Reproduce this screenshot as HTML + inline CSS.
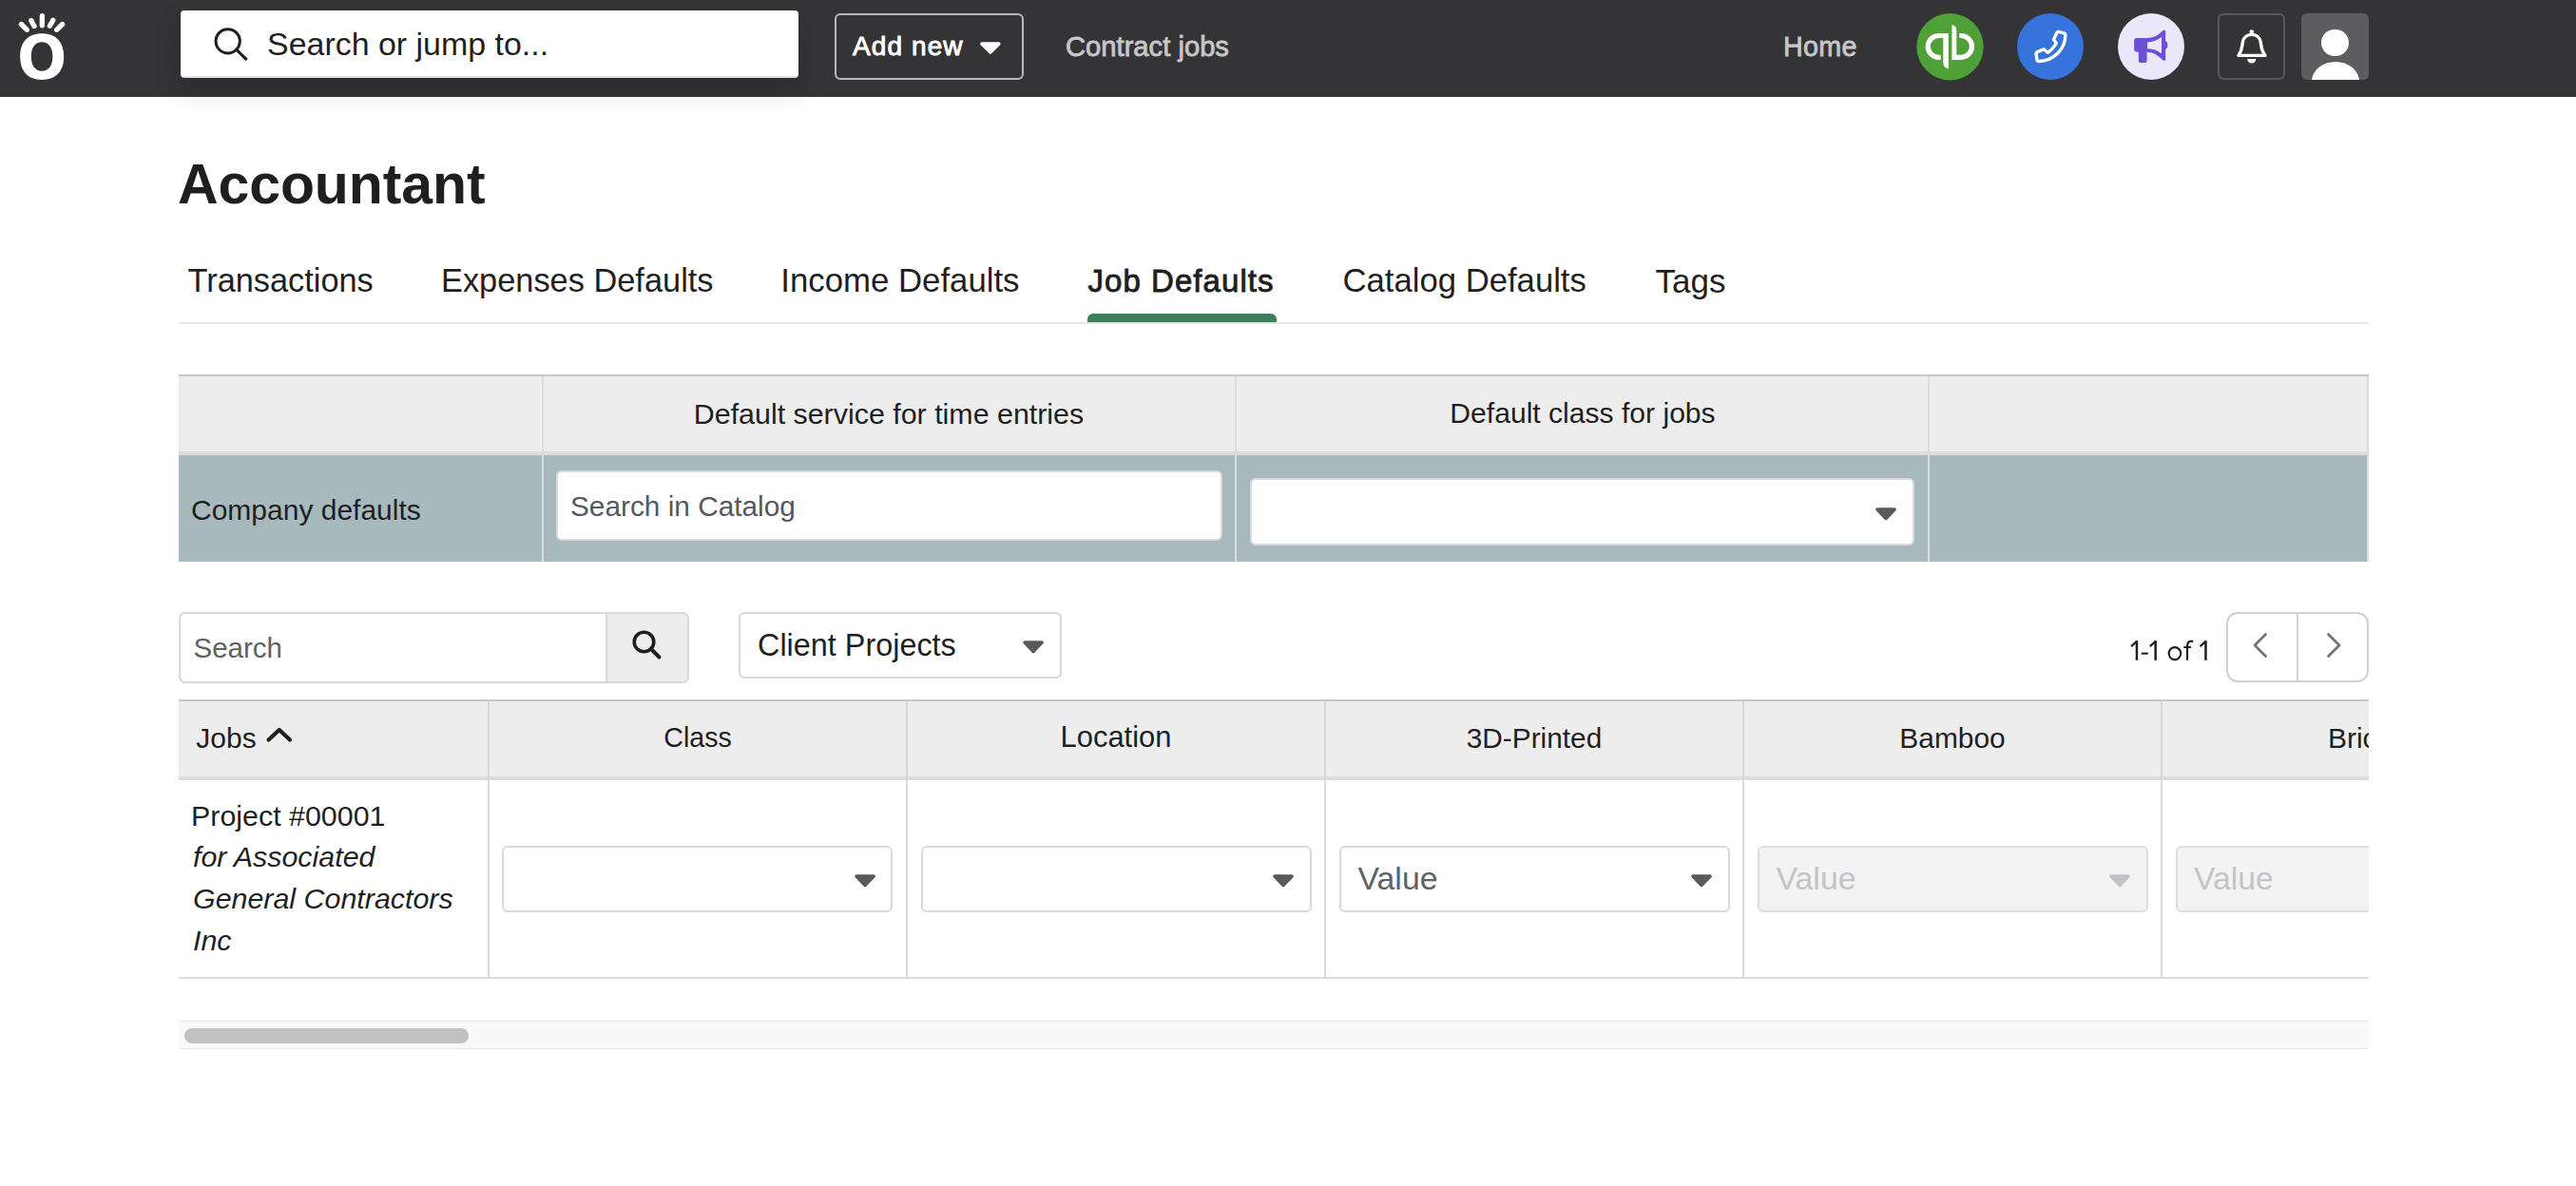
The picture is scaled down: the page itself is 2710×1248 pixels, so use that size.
<!DOCTYPE html>
<html><head><meta charset="utf-8">
<style>
*{box-sizing:border-box;margin:0;padding:0}
html,body{width:2710px;height:1248px;overflow:hidden;background:#fff;font-family:"Liberation Sans",sans-serif;color:#1f1f1f}
.a{position:absolute}
.t{position:absolute;white-space:nowrap}
#nav{position:absolute;left:0;top:0;width:2710px;height:101.5px;background:#343436}
.box{position:absolute;border:2px solid #dadade;border-radius:6px;background:#fff}
.caret{position:absolute}
</style></head><body>

<!-- NAV -->
<div id="nav">
  <svg class="a" style="left:0;top:0" width="100" height="100" viewBox="0 0 100 100">
    <path fill="#fff" fill-rule="evenodd" d="M44.15 35.20C58.87 35.20 67.15 43.98 67.15 59.60C67.15 75.22 58.87 84.00 44.15 84.00C29.43 84.00 21.15 75.22 21.15 59.60C21.15 43.98 29.43 35.20 44.15 35.20ZM44.10 44.30C51.11 44.30 55.40 50.08 55.40 59.50C55.40 68.92 51.11 74.70 44.10 74.70C37.09 74.70 32.80 68.92 32.80 59.50C32.80 50.08 37.09 44.30 44.10 44.30Z"/>
    <g stroke="#fff" stroke-width="5.3" stroke-linecap="round">
      <line x1="44.35" y1="16.65" x2="44.35" y2="26.75"/>
      <line x1="32.8" y1="21.5" x2="36" y2="27.5"/>
      <line x1="22.4" y1="25.5" x2="28.3" y2="31.3"/>
      <line x1="55.8" y1="21.3" x2="52.4" y2="27.3"/>
      <line x1="65.6" y1="25.5" x2="59.7" y2="31.3"/>
    </g>
  </svg>
  <div class="a" style="left:190px;top:11px;width:650px;height:71px;background:#fff;border-radius:4px;border-bottom:2px solid #dedfe4;box-shadow:0 12px 30px rgba(0,0,0,0.16)"></div>
  <svg class="a" style="left:220px;top:25px" width="50" height="45" viewBox="0 0 50 45">
    <circle cx="19.7" cy="18.3" r="12.65" fill="none" stroke="#1f1f1f" stroke-width="3"/>
    <line x1="28.6" y1="27.2" x2="38.7" y2="37" stroke="#1f1f1f" stroke-width="3.2" stroke-linecap="round"/>
  </svg>
  <div class="t" style="left:281px;top:30.3px;font-size:33.95px;line-height:33.95px;color:#1f1f1f">Search or jump to...</div>

  <div class="a" style="left:878px;top:14px;width:199px;height:70px;border:2px solid #b9b9bd;border-radius:6px"></div>
  <div class="t" style="left:897px;top:35px;font-size:28px;line-height:28px;color:#fff;-webkit-text-stroke:0.9px #fff;letter-spacing:1.1px">Add new</div>
  <svg class="a" style="left:1030.2px;top:43px" width="25" height="16" viewBox="0 0 25 16"><polygon points="3.0,3.1 20.8,3.1 11.9,11.9" fill="#fff" stroke="#fff" stroke-width="3.6" stroke-linejoin="round"/></svg>

  <div class="t" style="left:1121px;top:34.8px;font-size:29.2px;line-height:29.2px;color:#c7c7c9;-webkit-text-stroke:0.8px #c7c7c9;letter-spacing:0px">Contract jobs</div>
  <div class="t" style="left:1876px;top:34.6px;font-size:28.7px;line-height:28.7px;color:#c7c7c9;-webkit-text-stroke:0.8px #c7c7c9;letter-spacing:0.35px">Home</div>

  <!-- QB -->
  <svg class="a" style="left:2016px;top:14px" width="71" height="71" viewBox="0 0 71 71">
    <circle cx="35.5" cy="35.2" r="35.2" fill="#50a038"/>
    <g fill="none" stroke="#fff" stroke-width="5.2">
      <path d="M25.7 46.3H23.6A11.4 11.4 0 0 1 23.6 23.5H31"/>
      <path d="M45.3 23.5H47A11.4 11.4 0 0 1 47 46.3H40"/>
    </g>
    <path fill="#fff" d="M28.3 20.9h5.5v37.3c-3 -0.5 -5.5 -2.5 -5.5 -6z"/>
    <path fill="#fff" d="M37.4 11.9c3 0.5 4.9 2.5 4.9 6v31.1h-4.9z"/>
  </svg>
  <!-- Phone -->
  <svg class="a" style="left:2122px;top:14px" width="70" height="70" viewBox="0 0 70 70">
    <circle cx="35" cy="35" r="35" fill="#3673dd"/>
    <path fill="none" stroke="#fff" stroke-width="3.4" stroke-linejoin="round" d="M41.7 20.8Q42.5 19.2 44.25 19.6L49.05 20.8Q50.8 21.2 50.8 23C50.9 37.5 38.5 50 23.1 50.45Q21.3 50.5 21 48.7L20.1 43.1Q19.8 41.3 21.5 40.6L28 37.8L32.2 41.3C36 39 39 35.5 41.3 31.3L38.4 27.7Z"/>
  </svg>
  <!-- Megaphone -->
  <svg class="a" style="left:2228px;top:14px" width="70" height="70" viewBox="0 0 70 70">
    <circle cx="35" cy="35" r="35" fill="#ebe7fb"/>
    <g fill="#6b50d5">
      <rect x="17.1" y="26" width="14" height="14.7" rx="3"/>
      <rect x="21.8" y="36" width="8.8" height="16" rx="2"/>
      <ellipse cx="50.4" cy="33.5" rx="1.9" ry="4"/>
    </g>
    <path fill="#6b50d5" fill-rule="evenodd" d="M30 26C38 26 43 23 47 18.5C48.5 16.8 50.2 17.3 50.2 19.5V48C50.2 50 48.5 50.5 47 49C43 45 38 40.7 30 40.7Z M30.4 30.4C37 30.4 42 28 46 24.8V42.5C42 39 37 37.2 30.4 37.2Z"/>
  </svg>
  <!-- Bell -->
  <div class="a" style="left:2333px;top:14px;width:71px;height:70px;border:2px solid #58585a;border-radius:6px"></div>
  <svg class="a" style="left:2333px;top:14px" width="71" height="70" viewBox="0 0 71 70">
    <circle cx="35.8" cy="19.6" r="2.3" fill="#fff"/>
    <path fill="none" stroke="#fff" stroke-width="3.4" stroke-linejoin="round" d="M22 44.4H50C46 39 46 36 45.5 32C45 26 41 22.4 35.8 22.4C30.6 22.4 26.6 26 26.1 32C25.6 36 25.6 39 22 44.4Z"/>
    <path fill="#fff" d="M31.2 48h9.2a4.6 4.6 0 0 1 -9.2 0z"/>
  </svg>
  <!-- Avatar -->
  <div class="a" style="left:2421px;top:14px;width:71px;height:70px;background:#5d5d5f;border-radius:6px;overflow:hidden">
    <div class="a" style="left:21.4px;top:16.8px;width:28.6px;height:28.6px;border-radius:50%;background:#fff"></div>
    <div class="a" style="left:10.8px;top:50.7px;width:50.4px;height:40px;border-radius:25.2px 25.2px 0 0 / 21px 21px 0 0;background:#fff"></div>
  </div>
</div>

<!-- TITLE -->
<div class="t" style="left:187px;top:164.8px;font-size:59px;line-height:59px;letter-spacing:-0.1px;font-weight:700;color:#1f1f1f">Accountant</div>

<!-- TABS -->
<div class="t" style="left:197.5px;top:278.4px;font-size:34.35px;line-height:34.35px">Transactions</div>
<div class="t" style="left:464px;top:278.4px;font-size:34.36px;line-height:34.36px">Expenses Defaults</div>
<div class="t" style="left:821.3px;top:278.1px;font-size:34.77px;line-height:34.77px">Income Defaults</div>
<div class="t" style="left:1144.5px;top:279.2px;font-size:33px;line-height:33px;-webkit-text-stroke:0.9px #1f1f1f;letter-spacing:1.05px">Job Defaults</div>
<div class="t" style="left:1412.5px;top:278.1px;font-size:34.68px;line-height:34.68px">Catalog Defaults</div>
<div class="t" style="left:1741.5px;top:278px;font-size:35px;line-height:35px">Tags</div>
<div class="a" style="left:188px;top:339px;width:2304px;height:2px;background:#e6e6e6"></div>
<div class="a" style="left:1144px;top:330px;width:199px;height:9px;background:#3a805a;border-radius:6px 6px 0 0"></div>

<!-- DEFAULTS TABLE -->
<div class="a" style="left:188px;top:394px;width:2304px;height:2px;background:#c8c8c8"></div>
<div class="a" style="left:188px;top:396px;width:2304px;height:79px;background:#ededed"></div>
<div class="a" style="left:188px;top:475px;width:2304px;height:4px;background:#dcdcdc"></div>
<div class="a" style="left:188px;top:479px;width:2304px;height:112px;background:#a8b9bd"></div>
<div class="a" style="left:569.5px;top:396px;width:2px;height:195px;background:#dcdcdc"></div>
<div class="a" style="left:1299px;top:396px;width:2px;height:195px;background:#dcdcdc"></div>
<div class="a" style="left:2028px;top:396px;width:2px;height:195px;background:#dcdcdc"></div>
<div class="a" style="left:2490px;top:396px;width:2px;height:195px;background:#dcdcdc"></div>
<div class="t" style="left:571px;width:728px;text-align:center;top:420.4px;font-size:30.4px;line-height:30.4px">Default service for time entries</div>
<div class="t" style="left:1301px;width:728px;text-align:center;top:420.4px;font-size:30.1px;line-height:30.1px">Default class for jobs</div>
<div class="t" style="left:201px;top:521.6px;font-size:30px;line-height:30px">Company defaults</div>
<div class="box" style="left:585px;top:495px;width:701px;height:74px"></div>
<div class="t" style="left:600px;top:517.8px;font-size:29.8px;line-height:29.6px;color:#53595d">Search in Catalog</div>
<div class="box" style="left:1314.5px;top:503px;width:699px;height:70.5px"></div>
<svg class="caret" style="left:1971.8px;top:532.75px" width="25" height="16" viewBox="0 0 25 16"><polygon points="3.0,3.05 21.1,3.05 12.05,12.5" fill="#5a5a5c" stroke="#5a5a5c" stroke-width="3.6" stroke-linejoin="round"/></svg>

<!-- TOOLBAR -->
<div class="a" style="left:188px;top:644px;width:537px;height:74.5px;border:2px solid #d8d8dc;border-radius:7px;background:#fff;overflow:hidden">
  <div class="a" style="left:447px;top:0;width:2px;height:72px;background:#d8d8dc"></div>
  <div class="a" style="left:449px;top:0;width:86px;height:72px;background:#ededed"></div>
</div>
<div class="t" style="left:203.5px;top:666.6px;font-size:29.5px;line-height:29.5px;color:#5d6265">Search</div>
<svg class="a" style="left:660px;top:658px" width="42" height="42" viewBox="0 0 42 42">
  <circle cx="17.5" cy="17.5" r="10.3" fill="none" stroke="#1f1f1f" stroke-width="3.6"/>
  <line x1="25" y1="25" x2="33.5" y2="33.5" stroke="#1f1f1f" stroke-width="4" stroke-linecap="round"/>
</svg>
<div class="box" style="left:777px;top:644px;width:340px;height:69.5px;border-color:#d8d8dc"></div>
<div class="t" style="left:797px;top:663px;font-size:32.4px;line-height:32.4px">Client Projects</div>
<svg class="caret" style="left:1075.4px;top:673px" width="25" height="16" viewBox="0 0 25 16"><polygon points="3.0,3.05 21.1,3.05 12.05,12.5" fill="#5a5a5c" stroke="#5a5a5c" stroke-width="3.6" stroke-linejoin="round"/></svg>
<svg class="a" style="left:2236px;top:668px" width="92" height="32" viewBox="0 0 92 32"><g fill="#1f1f1f"><rect x="10.7" y="6.3" width="2.5" height="20.5"/><path d="M12.299999999999999 6.6L6.1 12.2" stroke="#1f1f1f" stroke-width="2.3" fill="none"/><rect x="16.8" y="18.6" width="6.95" height="2.1"/><rect x="30.4" y="6.3" width="2.5" height="20.5"/><path d="M32.0 6.6L25.799999999999997 12.2" stroke="#1f1f1f" stroke-width="2.3" fill="none"/><ellipse cx="51.95" cy="19.55" rx="6.3" ry="6.5" fill="none" stroke="#1f1f1f" stroke-width="2.15"/><path d="M65 26.8V12.5C65 8.5 67 6.7 69.3 6.7C70 6.7 70.6 6.9 71.1 7.2" fill="none" stroke="#1f1f1f" stroke-width="2.2"/><rect x="61.25" y="12.1" width="7.85" height="1.9"/><rect x="83.2" y="6.3" width="2.5" height="20.5"/><path d="M84.8 6.6L78.60000000000001 12.2" stroke="#1f1f1f" stroke-width="2.3" fill="none"/></g></svg>
<div class="a" style="left:2342px;top:643.7px;width:150px;height:74px;border:2px solid #d0d0d0;border-radius:12px;overflow:hidden">
  <div class="a" style="left:71.6px;top:0;width:2px;height:71px;background:#d0d0d0"></div>
</div>
<svg class="a" style="left:2342px;top:643.8px" width="150" height="73" viewBox="0 0 150 73">
  <polyline points="41.5,23.5 30,35 41.5,46.5" fill="none" stroke="#737373" stroke-width="2.8" stroke-linecap="round" stroke-linejoin="round"/>
  <polyline points="107.5,23.5 119,35 107.5,46.5" fill="none" stroke="#737373" stroke-width="2.8" stroke-linecap="round" stroke-linejoin="round"/>
</svg>

<!-- JOBS TABLE -->
<div class="a" style="left:188px;top:736px;width:2304px;height:2px;background:#c8c8c8"></div>
<div class="a" style="left:188px;top:738px;width:2304px;height:79px;background:#ededed"></div>
<div class="a" style="left:188px;top:817px;width:2304px;height:4px;background:#dcdcdc"></div>
<div class="a" style="left:188px;top:1028px;width:2304px;height:2px;background:#dcdcdc"></div>
<div class="a" style="left:513px;top:738px;width:2px;height:290px;background:#d9d9d9"></div>
<div class="a" style="left:953px;top:738px;width:2px;height:290px;background:#d9d9d9"></div>
<div class="a" style="left:1393px;top:738px;width:2px;height:290px;background:#d9d9d9"></div>
<div class="a" style="left:1833px;top:738px;width:2px;height:290px;background:#d9d9d9"></div>
<div class="a" style="left:2273px;top:738px;width:2px;height:290px;background:#d9d9d9"></div>

<div class="t" style="left:206.3px;top:761.6px;font-size:30px;line-height:30px">Jobs</div>
<svg class="a" style="left:276px;top:760px" width="36" height="26" viewBox="0 0 36 26"><polyline points="6.5,18.5 17.8,8 29,18.5" fill="none" stroke="#1f1f1f" stroke-width="4.2" stroke-linecap="round" stroke-linejoin="round"/></svg>
<div class="t" style="left:515px;width:438px;text-align:center;top:762px;font-size:28.6px;line-height:28.6px">Class</div>
<div class="t" style="left:955px;width:438px;text-align:center;top:761px;font-size:30.9px;line-height:30.9px">Location</div>
<div class="t" style="left:1395px;width:438px;text-align:center;top:761.6px;font-size:29.8px;line-height:29.8px">3D-Printed</div>
<div class="t" style="left:1835px;width:438px;text-align:center;top:761.6px;font-size:29.9px;line-height:29.9px">Bamboo</div>
<div style="position:absolute;left:188px;top:738px;width:2304px;height:300px;overflow:hidden">
  <div class="t" style="left:2261px;top:23.6px;font-size:29.9px;line-height:29.9px">Brick</div>
  <div class="box" style="left:2100.6px;top:151.5px;width:411px;height:70px;background:#f3f3f4;border-color:#dedee2"></div>
  <div class="t" style="left:2120px;top:169.9px;font-size:33.7px;line-height:33.7px;color:#c4c4c8">Value</div>
</div>

<div class="t" style="left:201px;top:842.6px;font-size:30.4px;line-height:30.4px">Project #00001</div>
<div class="t" style="left:203px;top:879.3px;font-size:30.4px;line-height:44px;font-style:italic;white-space:normal;width:300px">for Associated<br>General Contractors<br>Inc</div>

<div class="box" style="left:528.3px;top:889.5px;width:411px;height:70px"></div>
<svg class="caret" style="left:897.7px;top:919px" width="25" height="16" viewBox="0 0 25 16"><polygon points="3.0,3.05 21.1,3.05 12.05,12.5" fill="#5a5a5c" stroke="#5a5a5c" stroke-width="3.6" stroke-linejoin="round"/></svg>
<div class="box" style="left:968.6px;top:889.5px;width:411px;height:70px"></div>
<svg class="caret" style="left:1338px;top:919px" width="25" height="16" viewBox="0 0 25 16"><polygon points="3.0,3.05 21.1,3.05 12.05,12.5" fill="#5a5a5c" stroke="#5a5a5c" stroke-width="3.6" stroke-linejoin="round"/></svg>
<div class="box" style="left:1408.5px;top:889.5px;width:411px;height:70px"></div>
<div class="t" style="left:1428.5px;top:907.9px;font-size:33.85px;line-height:33.7px;color:#5d6265">Value</div>
<svg class="caret" style="left:1778.2px;top:919px" width="25" height="16" viewBox="0 0 25 16"><polygon points="3.0,3.05 21.1,3.05 12.05,12.5" fill="#5a5a5c" stroke="#5a5a5c" stroke-width="3.6" stroke-linejoin="round"/></svg>
<div class="box" style="left:1848.5px;top:889.5px;width:411px;height:70px;background:#f3f3f4;border-color:#dedee2"></div>
<div class="t" style="left:1868.5px;top:907.9px;font-size:33.85px;line-height:33.7px;color:#c4c4c8">Value</div>
<svg class="caret" style="left:2218.1px;top:919px" width="25" height="16" viewBox="0 0 25 16"><polygon points="3.0,3.05 21.1,3.05 12.05,12.5" fill="#c3c3c7" stroke="#c3c3c7" stroke-width="3.6" stroke-linejoin="round"/></svg>

<!-- SCROLLBAR -->
<div class="a" style="left:188px;top:1074px;width:2304px;height:29.5px;background:#f9f9f9;border-top:1.5px solid #e8e8e8;border-bottom:1.5px solid #e8e8e8"></div>
<div class="a" style="left:194px;top:1082px;width:299px;height:16px;background:#c1c1c1;border-radius:8px"></div>

</body></html>
